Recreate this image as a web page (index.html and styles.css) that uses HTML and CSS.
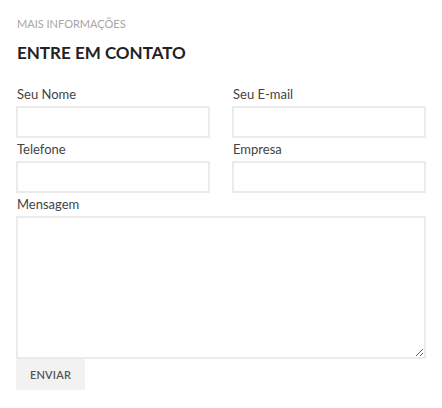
FILE: index.html
```html
<!DOCTYPE html>
<html lang="pt">
<head>
<meta charset="utf-8">
<title>Contato</title>
<link rel="stylesheet" href="styles.css">
</head>
<body>
<section class="contact">
  <p class="eyebrow">MAIS INFORMAÇÕES</p>
  <h2 class="title">ENTRE EM CONTATO</h2>
  <form class="form">
    <div class="grid">
      <label class="field">
        <span class="label">Seu Nome</span>
        <input class="input" type="text">
      </label>
      <label class="field">
        <span class="label">Seu E-mail</span>
        <input class="input" type="email">
      </label>
      <label class="field">
        <span class="label">Telefone</span>
        <input class="input" type="text">
      </label>
      <label class="field">
        <span class="label">Empresa</span>
        <input class="input" type="text">
      </label>
    </div>
    <label class="field">
      <span class="label">Mensagem</span>
      <textarea class="textarea"></textarea>
    </label>
    <button class="btn" type="button">ENVIAR</button>
  </form>
</section>
</body>
</html>
```
FILE: styles.css
```css
* { box-sizing: border-box; }
html, body { margin: 0; background: #fff; }
body {
  font-family: "Lato", "Noto Sans", sans-serif;
  color: #444;
  padding: 16px 16px 0 16px;
}
.contact { width: 410px; }
.eyebrow {
  margin: 0;
  font-size: 11px;
  line-height: 16px;
  color: #a6a6a6;
  padding-left: 1px;
}
.title {
  margin: 0;
  margin-top: 10px;
  font-size: 17px;
  line-height: 22px;
  font-weight: 700;
  color: #222;
  padding-left: 1px;
}
.form {
  margin-top: 20px;
  display: flex;
  flex-direction: column;
}
.grid {
  display: grid;
  grid-template-columns: 194px 194px;
  column-gap: 22px;
  row-gap: 1px;
}
.field {
  display: flex;
  flex-direction: column;
}
.label {
  font-size: 13px;
  line-height: 21px;
  color: #444;
  padding-left: 1px;
  margin-bottom: 1px;
}
.input {
  height: 32px;
  border: 2px solid #ebebeb;
  background: #fff;
  margin: 0;
  padding: 0 8px;
  outline: none;
}
.form > .field { margin-top: 1px; }
.textarea {
  height: 143px;
  border: 2px solid #ebebeb;
  margin: 0;
  padding: 8px;
  resize: vertical;
  display: block;
}
.btn {
  align-self: flex-start;
  width: 69px;
  height: 31px;
  border: 0;
  background: #f2f2f2;
  color: #555;
  font-family: "Lato", "Noto Sans", sans-serif;
  font-size: 11px;
  font-weight: 600;
  padding: 0;
  margin: 0;
  letter-spacing: 0.2px;
}
```
